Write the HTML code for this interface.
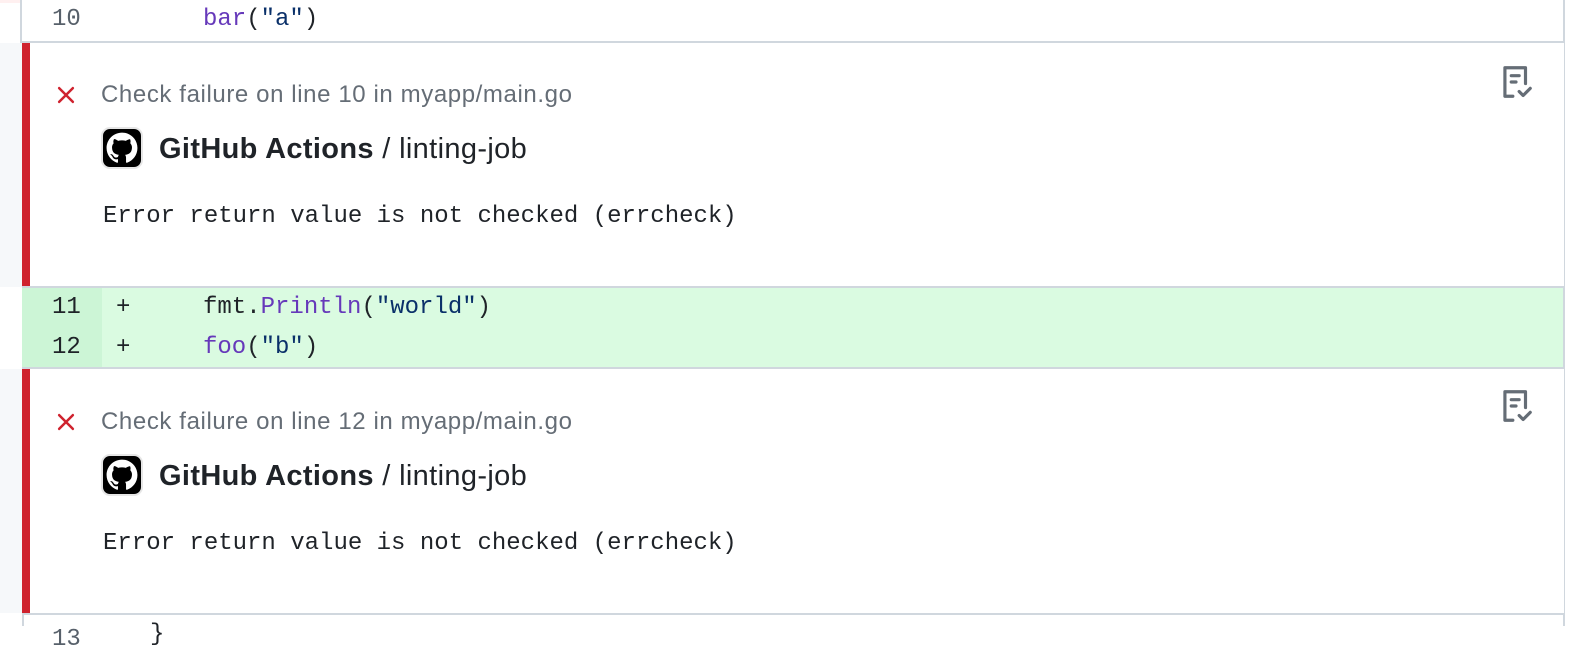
<!DOCTYPE html>
<html><head><meta charset="utf-8"><style>
*{margin:0;padding:0;box-sizing:border-box}
body{width:1592px;height:626px;background:#fff;position:relative;overflow:hidden;font-family:"Liberation Sans",sans-serif}
.abs{position:absolute}
.mono{font-family:"Liberation Mono",monospace;font-size:24px;white-space:pre}
.hl{background:#d0d7de}
.fn{color:#6639ba}.str{color:#0a3069}
.ann{position:absolute;left:0;width:1564px;background:#fff}
.gut{position:absolute;left:0;top:0;bottom:0;width:22px;background:#f6f8fa}
.bar{position:absolute;left:22px;top:0;bottom:0;width:8px;background:#cf222e}
.ttl{position:absolute;left:101px;font-size:24px;letter-spacing:0.6px;color:#656d76;line-height:30px;white-space:nowrap}
.x{position:absolute;left:55px;width:22px;height:22px}
.av{position:absolute;left:101px;width:42px;height:42px;border-radius:9px;background:#000;border:2px solid #e6e6e6}
.who{position:absolute;left:159px;font-size:29px;letter-spacing:0.35px;color:#1f2328;line-height:34px;white-space:nowrap}
.msg{position:absolute;left:103px;color:#1f2328;line-height:30px}
.ico{position:absolute;left:1497px;width:38px;height:38px}
</style></head><body>
<div class="abs hl" style="left:1563px;top:0;width:2px;height:626px"></div>
<div class="abs" style="left:0;top:0;width:20px;height:3px;background:#fff0f0"></div>
<div class="abs hl" style="left:20px;top:0;width:2px;height:42px"></div>
<div class="abs mono" style="left:52px;top:4px;line-height:32px;color:#57606a">10</div>
<div class="abs mono" style="left:203px;top:4px;line-height:32px;color:#1f2328"><span class="fn">bar</span>(<span class="str">"a"</span>)</div>
<div class="abs hl" style="left:20px;top:41px;width:1545px;height:2px"></div>

<div class="ann" style="top:43px;height:244px">
 <div class="gut"></div><div class="bar"></div>
 <svg class="x" style="top:41px" viewBox="0 0 16 16"><path d="M3 3L13 13M13 3L3 13" stroke="#cf222e" stroke-width="1.8" stroke-linecap="round"/></svg>
 <div class="ttl" style="top:37px">Check failure on line 10 in myapp/main.go</div>
 <div class="av" style="top:84px"><svg viewBox="0 0 16 16" width="38" height="38"><path fill="#fff" d="M8 1.5C4.4 1.5 1.5 4.4 1.5 8c0 2.9 1.9 5.3 4.4 6.2.3.1.4-.1.4-.3v-1.2c-1.8.4-2.2-.8-2.2-.8-.3-.7-.7-.9-.7-.9-.6-.4 0-.4 0-.4.6 0 1 .7 1 .7.6 1 1.5.7 1.9.5.1-.4.2-.7.4-.9-1.4-.2-2.9-.7-2.9-3.2 0-.7.3-1.3.7-1.7-.1-.2-.3-.8.1-1.7 0 0 .5-.2 1.8.7.5-.1 1.1-.2 1.6-.2s1.1.1 1.6.2c1.2-.8 1.8-.7 1.8-.7.4.9.1 1.5.1 1.7.4.5.7 1 .7 1.7 0 2.5-1.5 3-2.9 3.2.2.2.4.6.4 1.2v1.8c0 .2.1.4.4.3 2.6-.9 4.4-3.3 4.4-6.2C14.5 4.4 11.6 1.5 8 1.5z"/></svg></div>
 <div class="who" style="top:89px"><b>GitHub Actions</b> / linting-job</div>
 <div class="msg mono" style="top:159px">Error return value is not checked (errcheck)</div>
 <svg class="ico" style="top:20px" viewBox="0 0 24 24" fill="none" stroke="#656d76" stroke-width="2" stroke-linecap="round" stroke-linejoin="round"><path d="M10 21H5V3h13v10"/><path d="M9 8h5M9 12h3"/><path d="M14 18l2.5 2.5L21 16"/></svg>
</div>
<div class="abs hl" style="left:22px;top:286px;width:1543px;height:2px"></div>

<div class="abs" style="left:22px;top:288px;width:1541px;height:80px;background:#dafbe1"></div>
<div class="abs" style="left:22px;top:288px;width:80px;height:80px;background:#ccf5d6"></div>
<div class="abs mono" style="left:52px;top:288px;line-height:40px;color:#1f2328">11
12</div>
<div class="abs mono" style="left:116px;top:288px;line-height:40px;color:#1f2328">+
+</div>
<div class="abs mono" style="left:203px;top:288px;line-height:40px;color:#1f2328">fmt.<span class="fn">Println</span>(<span class="str">"world"</span>)
<span class="fn">foo</span>(<span class="str">"b"</span>)</div>
<div class="abs hl" style="left:22px;top:367px;width:1543px;height:2px"></div>

<div class="ann" style="top:369px;height:244px">
 <div class="gut"></div><div class="bar"></div>
 <svg class="x" style="top:42px" viewBox="0 0 16 16"><path d="M3 3L13 13M13 3L3 13" stroke="#cf222e" stroke-width="1.8" stroke-linecap="round"/></svg>
 <div class="ttl" style="top:38px">Check failure on line 12 in myapp/main.go</div>
 <div class="av" style="top:85px"><svg viewBox="0 0 16 16" width="38" height="38"><path fill="#fff" d="M8 1.5C4.4 1.5 1.5 4.4 1.5 8c0 2.9 1.9 5.3 4.4 6.2.3.1.4-.1.4-.3v-1.2c-1.8.4-2.2-.8-2.2-.8-.3-.7-.7-.9-.7-.9-.6-.4 0-.4 0-.4.6 0 1 .7 1 .7.6 1 1.5.7 1.9.5.1-.4.2-.7.4-.9-1.4-.2-2.9-.7-2.9-3.2 0-.7.3-1.3.7-1.7-.1-.2-.3-.8.1-1.7 0 0 .5-.2 1.8.7.5-.1 1.1-.2 1.6-.2s1.1.1 1.6.2c1.2-.8 1.8-.7 1.8-.7.4.9.1 1.5.1 1.7.4.5.7 1 .7 1.7 0 2.5-1.5 3-2.9 3.2.2.2.4.6.4 1.2v1.8c0 .2.1.4.4.3 2.6-.9 4.4-3.3 4.4-6.2C14.5 4.4 11.6 1.5 8 1.5z"/></svg></div>
 <div class="who" style="top:90px"><b>GitHub Actions</b> / linting-job</div>
 <div class="msg mono" style="top:160px">Error return value is not checked (errcheck)</div>
 <svg class="ico" style="top:18px" viewBox="0 0 24 24" fill="none" stroke="#656d76" stroke-width="2" stroke-linecap="round" stroke-linejoin="round"><path d="M10 21H5V3h13v10"/><path d="M9 8h5M9 12h3"/><path d="M14 18l2.5 2.5L21 16"/></svg>
</div>
<div class="abs hl" style="left:22px;top:613px;width:1543px;height:2px"></div>
<div class="abs hl" style="left:22px;top:613px;width:2px;height:13px"></div>
<div class="abs mono" style="left:52px;top:624px;line-height:32px;color:#57606a">13</div>
<div class="abs mono" style="left:150px;top:619px;line-height:32px;color:#1f2328">}</div>
</body></html>
